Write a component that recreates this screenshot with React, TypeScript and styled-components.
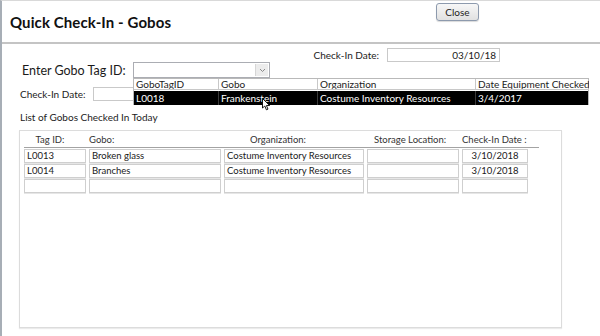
import * as React from "react";
import styled, { createGlobalStyle } from "styled-components";

const GlobalStyle = createGlobalStyle`
  html, body {
    margin: 0;
    padding: 0;
    background: #ffffff;
  }
  body {
    font-family: "Lato", "Open Sans", sans-serif;
    color: #1a1a1a;
  }
`;

const LOOKUP_COLUMNS = [
  { key: "tag", label: "GoboTagID", width: 85 },
  { key: "gobo", label: "Gobo", width: 99 },
  { key: "org", label: "Organization", width: 158 },
  { key: "date", label: "Date Equipment Checked Out", width: 113 },
];

const LOOKUP_ROW = ["L0018", "Frankenstein", "Costume Inventory Resources", "3/4/2017"];

const TABLE_HEADERS = [
  { label: "Tag ID:", align: "center", pad: 0 },
  { label: "Gobo:", align: "left", pad: 0 },
  { label: "Organization:", align: "left", pad: 26 },
  { label: "Storage Location:", align: "left", pad: 7 },
  { label: "Check-In Date :", align: "left", pad: 0 },
];

const CHECKED_IN = [
  { tag: "L0013", gobo: "Broken glass", org: "Costume Inventory Resources", location: "", date: "3/10/2018" },
  { tag: "L0014", gobo: "Branches", org: "Costume Inventory Resources", location: "", date: "3/10/2018" },
  { tag: "", gobo: "", org: "", location: "", date: "" },
];

const App: React.FC = () => {
  return (
    <>
      <GlobalStyle />
      <Window>
        <Header>
          <Title>Quick Check-In - Gobos</Title>
          <CloseButton type="button">Close</CloseButton>
        </Header>

        <Form>
          <DateRow>
            <SmallLabel>Check-In Date:</SmallLabel>
            <DateBox>03/10/18</DateBox>
          </DateRow>

          <TagRow>
            <BigLabel>Enter Gobo Tag ID:</BigLabel>
            <Combo>
              <ComboText />
              <ComboArrow>
                <svg width="7" height="5" viewBox="0 0 7 5">
                  <path d="M1 1 L3.5 3.5 L6 1" fill="none" stroke="#8a8a8a" strokeWidth="1" />
                </svg>
              </ComboArrow>
              <Dropdown>
                <LookupRow>
                  {LOOKUP_COLUMNS.map((c) => (
                    <LookupHead key={c.key} $w={c.width}>
                      {c.label}
                    </LookupHead>
                  ))}
                </LookupRow>
                <LookupRow $selected>
                  {LOOKUP_ROW.map((v, i) => (
                    <LookupCell key={i} $w={LOOKUP_COLUMNS[i].width}>
                      {v}
                    </LookupCell>
                  ))}
                </LookupRow>
                <Cursor width="9" height="13" viewBox="0 0 9 13">
                  <path
                    d="M0.5 0.5 L0.5 10 L2.8 8 L4.4 11.8 L6 11.1 L4.4 7.5 L7.6 7.5 Z"
                    fill="#ffffff"
                    stroke="#000000"
                    strokeWidth="0.9"
                    strokeLinejoin="round"
                  />
                </Cursor>
              </Dropdown>
            </Combo>
          </TagRow>

          <LowerDateRow>
            <SmallLabel>Check-In Date:</SmallLabel>
            <ShortBox />
          </LowerDateRow>

          <SectionLabel>List of Gobos Checked In Today</SectionLabel>

          <TablePanel>
            <HeaderGrid>
              {TABLE_HEADERS.map((h) => (
                <HeaderLabel key={h.label} $align={h.align} $pad={h.pad}>
                  {h.label}
                </HeaderLabel>
              ))}
            </HeaderGrid>
            <Rows>
              {CHECKED_IN.map((r, i) => (
                <RowGrid key={i}>
                  <Cell>{r.tag}</Cell>
                  <Cell>{r.gobo}</Cell>
                  <Cell>{r.org}</Cell>
                  <Cell>{r.location}</Cell>
                  <Cell $center>{r.date}</Cell>
                </RowGrid>
              ))}
            </Rows>
          </TablePanel>
        </Form>
      </Window>
    </>
  );
};

const Window = styled.div`
  width: 600px;
  height: 336px;
  box-sizing: border-box;
  border-left: 2px solid #a7aeb6;
  border-top: 1px solid #d9d9d9;
  overflow: hidden;
  background: #ffffff;
`;

const Header = styled.div`
  height: 39px;
  display: flex;
  align-items: flex-start;
  padding: 2px 121px 0 8px;
  border-bottom: 2px solid #c4c4c4;
`;

const Title = styled.h1`
  flex: 1;
  margin: 10px 0 0 0;
  font-size: 15px;
  font-weight: 700;
  color: #111;
  letter-spacing: 0.1px;
`;

const CloseButton = styled.button`
  width: 43px;
  height: 18px;
  padding: 0;
  border: 1px solid #8d9aad;
  border-radius: 3px;
  background: linear-gradient(#f7f7f7, #e1e1e1);
  box-shadow: 0 1px 1px rgba(0, 0, 0, 0.15);
  font-family: inherit;
  font-size: 10px;
  color: #222;
`;

const Form = styled.div`
  display: flex;
  flex-direction: column;
`;

const DateRow = styled.div`
  display: flex;
  align-items: center;
  justify-content: flex-end;
  gap: 8px;
  padding: 4px 100px 0 0;
  height: 14px;
`;

const SmallLabel = styled.span`
  font-size: 10px;
  color: #222;
`;

const DateBox = styled.div`
  width: 113px;
  height: 14px;
  box-sizing: border-box;
  border: 1px solid #c9c9c9;
  font-size: 10px;
  text-align: right;
  line-height: 12px;
  padding-right: 3px;
`;

const TagRow = styled.div`
  display: flex;
  align-items: center;
  padding-left: 20px;
  height: 16px;
  position: relative;
  z-index: 2;
`;

const BigLabel = styled.span`
  width: 111px;
  font-size: 12.5px;
  color: #1a1a1a;
`;

const Combo = styled.div`
  position: relative;
  display: flex;
  width: 137px;
  height: 16px;
  box-sizing: border-box;
  border: 1px solid #abadb3;
  background: #fff;
`;

const ComboText = styled.div`
  flex: 1;
`;

const ComboArrow = styled.div`
  width: 12px;
  margin: 1px;
  background: #ececec;
  border-left: 1px solid #d6d6d6;
  display: flex;
  align-items: center;
  justify-content: center;
`;

const Dropdown = styled.div`
  position: absolute;
  top: 15px;
  left: -1px;
  width: 456px;
  background: #fff;
  border: 1px solid #b9b9b9;
  border-bottom: none;
  box-sizing: border-box;
`;

const LookupRow = styled.div<{ $selected?: boolean }>`
  display: flex;
  height: ${(p) => (p.$selected ? 14 : 11)}px;
  margin-top: ${(p) => (p.$selected ? 1 : 0)}px;
  background: ${(p) => (p.$selected ? "#000" : "#fff")};
  color: ${(p) => (p.$selected ? "#fff" : "#222")};
`;

const LookupHead = styled.div<{ $w: number }>`
  width: ${(p) => p.$w}px;
  flex-shrink: 0;
  box-sizing: border-box;
  border-right: 1px solid #c8c8c8;
  border-bottom: 1px solid #c8c8c8;
  padding-left: 2px;
  font-size: 10px;
  line-height: 11px;
  white-space: nowrap;
  overflow: hidden;
  &:last-child {
    border-right: none;
  }
`;

const LookupCell = styled.div<{ $w: number }>`
  width: ${(p) => p.$w}px;
  flex-shrink: 0;
  box-sizing: border-box;
  border-right: 1px solid #3a3a3a;
  padding-left: 2px;
  font-size: 10px;
  line-height: 14px;
  white-space: nowrap;
  overflow: hidden;
  &:last-child {
    border-right: none;
  }
`;

const Cursor = styled.svg`
  position: absolute;
  left: 128px;
  top: 19px;
`;

const LowerDateRow = styled.div`
  display: flex;
  align-items: center;
  gap: 8px;
  padding: 9px 0 0 18px;
  height: 14px;
`;

const ShortBox = styled.div`
  width: 90px;
  height: 14px;
  box-sizing: border-box;
  border: 1px solid #c9c9c9;
`;

const SectionLabel = styled.div`
  margin: 10px 0 0 18px;
  font-size: 10px;
  color: #222;
  height: 14px;
`;

const TablePanel = styled.div`
  margin: 5px 0 0 17px;
  width: 543px;
  height: 198px;
  box-sizing: border-box;
  border: 1px solid #dcdcdc;
  box-shadow: 0 1px 1px rgba(0, 0, 0, 0.08);
  padding: 3px 0 0 4px;
`;

const HeaderGrid = styled.div`
  display: grid;
  grid-template-columns: 62px 132px 140px 92px 66px;
  column-gap: 3px;
  width: 515px;
  height: 12px;
  border-bottom: 1px solid #a3a3a3;
  padding-bottom: 1px;
`;

const HeaderLabel = styled.div<{ $align: string; $pad: number }>`
  text-align: ${(p) => p.$align};
  padding-left: ${(p) => p.$pad}px;
  padding-right: ${(p) => (p.$align === "center" ? 10 : 0)}px;
  font-size: 9.5px;
  color: #333;
  white-space: nowrap;
`;

const Rows = styled.div`
  display: flex;
  flex-direction: column;
  gap: 1px;
  margin-top: 1px;
`;

const RowGrid = styled.div`
  display: grid;
  grid-template-columns: 62px 132px 140px 92px 66px;
  column-gap: 3px;
`;

const Cell = styled.div<{ $center?: boolean }>`
  height: 14px;
  box-sizing: border-box;
  border: 1px solid #cfcfcf;
  box-shadow: 0 1px 0 #e6e6e6;
  padding: 0 2px;
  font-size: 9.5px;
  line-height: 12px;
  text-align: ${(p) => (p.$center ? "center" : "left")};
  white-space: nowrap;
  overflow: hidden;
`;

export default App;
